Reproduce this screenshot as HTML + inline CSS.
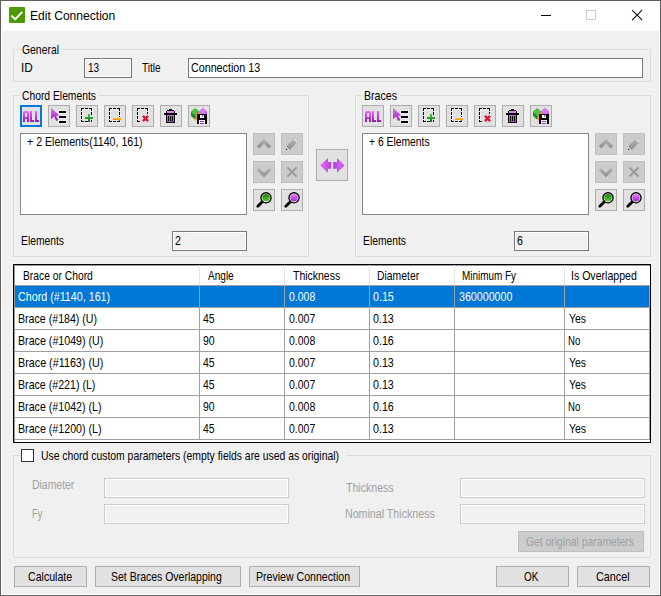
<!DOCTYPE html>
<html><head><meta charset="utf-8"><title>Edit Connection</title>
<style>
html,body{margin:0;padding:0;}
body{width:661px;height:596px;overflow:hidden;position:relative;background:#fff;font-family:"Liberation Sans",sans-serif;font-size:12.4px;color:#000;}
div,span{position:absolute;box-sizing:border-box;}
.t{white-space:nowrap;line-height:14px;height:14px;font-size:12.4px;transform-origin:0 0;}
.dis{color:#a0a0a0;}
.sel{color:#fff;}
.grp{border:1px solid #dcdcdc;}
.m{background:#f0f0f0;height:3px;}
.btn{background:#e1e1e1;border:1px solid #adadad;}
.btn.d{background:#cccccc;border-color:#bfbfbf;}
.btn.f{border:2px solid #0078d7;}
.tb{background:#fff;border:1px solid #7a7a7a;}
.ro{background:#f0f0f0;border:1px solid #7a7a7a;box-shadow:inset 0 0 0 1px #fff;}
.dtb{background:#f0f0f0;border:1px solid #cccccc;box-shadow:inset 0 0 0 1px #fff;}
svg{position:absolute;left:0;top:0;overflow:visible;}
.hl{background:#a0a0a0;height:1px;left:15px;width:635px;}
.vl{background:#a0a0a0;width:1px;top:286px;height:154px;}
.hv{background:#e5e5e5;width:1px;top:265px;height:20px;}
</style></head><body>
<!-- window frame -->
<div style="left:0;top:0;width:661px;height:596px;background:#5f5f5f;"></div>
<div style="left:1px;top:1px;width:659px;height:594px;background:#fff;"></div>
<div style="left:2px;top:31px;width:657px;height:563px;background:#f0f0f0;"></div>

<!-- title bar -->
<div style="left:9px;top:7px;width:16px;height:16px;background:#4e9a06;border-radius:1px;">
<svg width="16" height="16" viewBox="0 0 16 16"><path d="M2.3 8.6 L6.3 12.2 L13.3 4.9" fill="none" stroke="#fff" stroke-width="1.9"/></svg></div>
<span class="t" style="left:30.00px;top:9px;font-size:12px;transform:scaleX(1.0066);">Edit Connection</span>
<div style="left:541px;top:15px;width:10px;height:1px;background:#000;"></div>
<div style="left:586px;top:10px;width:10px;height:10px;border:1px solid #cccccc;"></div>
<svg width="661" height="31"><path d="M632.5 10.5 L641.7 19.7 M641.7 10.5 L632.5 19.7" stroke="#000" stroke-width="1.05" stroke-linecap="square" fill="none"/></svg>

<!-- General group -->
<div class="grp" style="left:13px;top:49px;width:638px;height:33px;"></div>
<div class="m" style="left:20px;top:48px;width:41px;"></div>
<div class="ro" style="left:84px;top:58px;width:48px;height:20px;"></div>
<div class="tb" style="left:188px;top:58px;width:455px;height:20px;"></div>

<!-- Chord Elements group -->
<div class="grp" style="left:13px;top:95px;width:296px;height:162px;"></div>
<div class="m" style="left:20px;top:94px;width:78px;"></div>
<div class="btn f" style="left:20px;top:105px;width:22px;height:22px;"></div>
<div class="btn" style="left:48px;top:105px;width:22px;height:22px;"></div>
<div class="btn" style="left:76px;top:105px;width:22px;height:22px;"></div>
<div class="btn" style="left:104px;top:105px;width:22px;height:22px;"></div>
<div class="btn" style="left:132px;top:105px;width:22px;height:22px;"></div>
<div class="btn" style="left:160px;top:105px;width:22px;height:22px;"></div>
<div class="btn" style="left:188px;top:105px;width:22px;height:22px;"></div>
<div class="tb" style="left:20px;top:133px;width:227px;height:82px;border-color:#828790;"></div>
<div class="btn d" style="left:253px;top:133px;width:22px;height:22px;"></div>
<div class="btn d" style="left:281px;top:133px;width:22px;height:22px;"></div>
<div class="btn d" style="left:253px;top:161px;width:22px;height:22px;"></div>
<div class="btn d" style="left:281px;top:161px;width:22px;height:22px;"></div>
<div class="btn" style="left:253px;top:189px;width:22px;height:22px;"></div>
<div class="btn" style="left:281px;top:189px;width:22px;height:22px;"></div>
<div class="ro" style="left:172px;top:231px;width:75px;height:20px;"></div>

<!-- swap -->
<div class="btn" style="left:316px;top:149px;width:32px;height:32px;"></div>

<!-- Braces group -->
<div class="grp" style="left:355px;top:95px;width:296px;height:162px;"></div>
<div class="m" style="left:362px;top:94px;width:38px;"></div>
<div class="btn" style="left:362px;top:105px;width:22px;height:22px;"></div>
<div class="btn" style="left:390px;top:105px;width:22px;height:22px;"></div>
<div class="btn" style="left:418px;top:105px;width:22px;height:22px;"></div>
<div class="btn" style="left:446px;top:105px;width:22px;height:22px;"></div>
<div class="btn" style="left:474px;top:105px;width:22px;height:22px;"></div>
<div class="btn" style="left:502px;top:105px;width:22px;height:22px;"></div>
<div class="btn" style="left:530px;top:105px;width:22px;height:22px;"></div>
<div class="tb" style="left:362px;top:133px;width:227px;height:82px;border-color:#828790;"></div>
<div class="btn d" style="left:595px;top:133px;width:22px;height:22px;"></div>
<div class="btn d" style="left:623px;top:133px;width:22px;height:22px;"></div>
<div class="btn d" style="left:595px;top:161px;width:22px;height:22px;"></div>
<div class="btn d" style="left:623px;top:161px;width:22px;height:22px;"></div>
<div class="btn" style="left:595px;top:189px;width:22px;height:22px;"></div>
<div class="btn" style="left:623px;top:189px;width:22px;height:22px;"></div>
<div class="ro" style="left:514px;top:231px;width:75px;height:20px;"></div>

<!-- grid -->
<div style="left:13px;top:264px;width:638px;height:179px;background:#fff;border:1px solid #000;"></div>
<div style="left:14px;top:265px;width:636px;height:1px;background:#9a9a9a;"></div>
<div style="left:14px;top:265px;width:1px;height:177px;background:#9a9a9a;"></div>
<div style="left:15px;top:286px;width:635px;height:21px;background:#0078d7;"></div>
<div class="hl" style="top:285px;"></div>
<div class="hl" style="top:307px;"></div><div class="hl" style="top:329px;"></div><div class="hl" style="top:351px;"></div>
<div class="hl" style="top:373px;"></div><div class="hl" style="top:395px;"></div><div class="hl" style="top:417px;"></div><div class="hl" style="top:439px;"></div>
<div class="vl" style="left:199px;"></div><div class="vl" style="left:284px;"></div><div class="vl" style="left:369px;"></div>
<div class="vl" style="left:454px;"></div><div class="vl" style="left:564px;"></div><div class="vl" style="left:649px;"></div>
<div class="hv" style="left:199px;"></div><div class="hv" style="left:284px;"></div><div class="hv" style="left:369px;"></div>
<div class="hv" style="left:454px;"></div><div class="hv" style="left:564px;"></div>

<!-- custom params group -->
<div class="grp" style="left:13px;top:455px;width:638px;height:103px;"></div>
<div class="m" style="left:20px;top:454px;width:326px;"></div>
<div style="left:21px;top:449px;width:13px;height:13px;background:#fff;border:1px solid #333;"></div>
<div class="dtb" style="left:104px;top:478px;width:185px;height:20px;"></div>
<div class="dtb" style="left:104px;top:504px;width:185px;height:20px;"></div>
<div class="dtb" style="left:460px;top:478px;width:185px;height:20px;"></div>
<div class="dtb" style="left:460px;top:504px;width:185px;height:20px;"></div>
<div class="btn d" style="left:518px;top:531px;width:126px;height:21px;"></div>

<!-- bottom buttons -->
<div class="btn" style="left:14px;top:566px;width:73px;height:21px;"></div>
<div class="btn" style="left:95px;top:566px;width:146px;height:21px;"></div>
<div class="btn" style="left:249px;top:566px;width:111px;height:21px;"></div>
<div class="btn" style="left:496px;top:566px;width:73px;height:21px;"></div>
<div class="btn" style="left:577px;top:566px;width:73px;height:21px;"></div>

<svg width="661" height="596" viewBox="0 0 661 596" shape-rendering="auto"><defs>
<linearGradient id="gP" gradientUnits="userSpaceOnUse" x1="0" y1="111" x2="0" y2="122"><stop offset="0" stop-color="#e968ff"/><stop offset="1" stop-color="#9618b4"/></linearGradient>
<linearGradient id="gC" gradientUnits="userSpaceOnUse" x1="0" y1="108" x2="0" y2="121"><stop offset="0" stop-color="#e272ff"/><stop offset="1" stop-color="#9c1cba"/></linearGradient>
<linearGradient id="gG" gradientUnits="userSpaceOnUse" x1="0" y1="114" x2="0" y2="122"><stop offset="0" stop-color="#46cc46"/><stop offset="1" stop-color="#057805"/></linearGradient>
<linearGradient id="gO" gradientUnits="userSpaceOnUse" x1="0" y1="118" x2="0" y2="120"><stop offset="0" stop-color="#ffc31e"/><stop offset="1" stop-color="#ff8800"/></linearGradient>
<linearGradient id="gT" gradientUnits="userSpaceOnUse" x1="0" y1="115" x2="0" y2="122"><stop offset="0" stop-color="#d468f0"/><stop offset="1" stop-color="#b040d2"/></linearGradient>
<linearGradient id="gGray" x1="0" y1="0" x2="0" y2="1"><stop offset="0" stop-color="#b4b4b4"/><stop offset="1" stop-color="#8c8c8c"/></linearGradient>
<linearGradient id="gLG" x1="0" y1="0" x2="0" y2="1"><stop offset="0" stop-color="#168400"/><stop offset="1" stop-color="#5ccc38"/></linearGradient>
<linearGradient id="gLP" x1="0" y1="0" x2="0" y2="1"><stop offset="0" stop-color="#e878ff"/><stop offset="1" stop-color="#a826c8"/></linearGradient>
<linearGradient id="gAL" x1="0" y1="0" x2="1" y2="0"><stop offset="0" stop-color="#e878ff"/><stop offset="1" stop-color="#b23cd6"/></linearGradient>
<linearGradient id="gAR" x1="0" y1="0" x2="1" y2="0"><stop offset="0" stop-color="#b23cd6"/><stop offset="0.6" stop-color="#cc62ee"/><stop offset="1" stop-color="#c050e4"/></linearGradient>
</defs><g><path fill="url(#gP)" fill-rule="evenodd" d="M23 122V113Q23 111 25 111H27Q29 111 29 113V122H27V119H25V122ZM25 113H27V117H25Z"/><path fill="url(#gP)" d="M30 111H32V120H34V122H30ZM35 111H37V120H39V122H35Z"/><rect x="58" y="110" width="9" height="4" fill="#f2f2f2" opacity="0.85"/><rect x="59" y="111" width="7" height="2" fill="#000" /><rect x="58" y="115" width="9" height="4" fill="#f2f2f2" opacity="0.85"/><rect x="59" y="116" width="7" height="2" fill="#000" /><rect x="58" y="120" width="9" height="4" fill="#f2f2f2" opacity="0.85"/><rect x="59" y="121" width="7" height="2" fill="#000" /><path fill="url(#gC)" d="M51 107.8L51 119.2L53.9 116.4L56.3 121L58.3 119.9L56 115.7L59.4 115.6Z"/><rect x="82" y="109" width="3" height="1" fill="#ffffff" opacity="0.55"/><rect x="86" y="109" width="3" height="1" fill="#ffffff" opacity="0.55"/><rect x="90" y="109" width="3" height="1" fill="#ffffff" opacity="0.55"/><rect x="82" y="109" width="1" height="3" fill="#ffffff" opacity="0.55"/><rect x="82" y="113" width="1" height="3" fill="#ffffff" opacity="0.55"/><rect x="82" y="117" width="1" height="3" fill="#ffffff" opacity="0.55"/><rect x="82" y="121" width="1" height="2" fill="#ffffff" opacity="0.55"/><rect x="92" y="109" width="1" height="3" fill="#ffffff" opacity="0.55"/><rect x="92" y="113" width="1" height="3" fill="#ffffff" opacity="0.55"/><rect x="82" y="122" width="3" height="1" fill="#ffffff" opacity="0.55"/><rect x="86" y="122" width="3" height="1" fill="#ffffff" opacity="0.55"/><rect x="92" y="121" width="1" height="2" fill="#ffffff" opacity="0.55"/><rect x="81" y="108" width="3" height="1" fill="#000" /><rect x="85" y="108" width="3" height="1" fill="#000" /><rect x="89" y="108" width="3" height="1" fill="#000" /><rect x="81" y="108" width="1" height="3" fill="#000" /><rect x="81" y="112" width="1" height="3" fill="#000" /><rect x="81" y="116" width="1" height="3" fill="#000" /><rect x="81" y="120" width="1" height="2" fill="#000" /><rect x="91" y="108" width="1" height="3" fill="#000" /><rect x="91" y="112" width="1" height="3" fill="#000" /><rect x="81" y="121" width="3" height="1" fill="#000" /><rect x="85" y="121" width="3" height="1" fill="#000" /><rect x="91" y="120" width="1" height="2" fill="#000" /><rect x="85" y="117" width="8" height="2" fill="url(#gG)" /><rect x="88" y="114" width="2" height="8" fill="url(#gG)" /><rect x="110" y="109" width="3" height="1" fill="#ffffff" opacity="0.55"/><rect x="114" y="109" width="3" height="1" fill="#ffffff" opacity="0.55"/><rect x="118" y="109" width="3" height="1" fill="#ffffff" opacity="0.55"/><rect x="110" y="109" width="1" height="3" fill="#ffffff" opacity="0.55"/><rect x="110" y="113" width="1" height="3" fill="#ffffff" opacity="0.55"/><rect x="110" y="117" width="1" height="3" fill="#ffffff" opacity="0.55"/><rect x="110" y="121" width="1" height="2" fill="#ffffff" opacity="0.55"/><rect x="120" y="109" width="1" height="3" fill="#ffffff" opacity="0.55"/><rect x="120" y="113" width="1" height="3" fill="#ffffff" opacity="0.55"/><rect x="110" y="122" width="3" height="1" fill="#ffffff" opacity="0.55"/><rect x="114" y="122" width="3" height="1" fill="#ffffff" opacity="0.55"/><rect x="118" y="122" width="3" height="1" fill="#ffffff" opacity="0.55"/><rect x="120" y="117" width="1" height="1" fill="#ffffff" opacity="0.55"/><rect x="120" y="121" width="1" height="2" fill="#ffffff" opacity="0.55"/><rect x="109" y="108" width="3" height="1" fill="#000" /><rect x="113" y="108" width="3" height="1" fill="#000" /><rect x="117" y="108" width="3" height="1" fill="#000" /><rect x="109" y="108" width="1" height="3" fill="#000" /><rect x="109" y="112" width="1" height="3" fill="#000" /><rect x="109" y="116" width="1" height="3" fill="#000" /><rect x="109" y="120" width="1" height="2" fill="#000" /><rect x="119" y="108" width="1" height="3" fill="#000" /><rect x="119" y="112" width="1" height="3" fill="#000" /><rect x="109" y="121" width="3" height="1" fill="#000" /><rect x="113" y="121" width="3" height="1" fill="#000" /><rect x="117" y="121" width="3" height="1" fill="#000" /><rect x="119" y="116" width="1" height="1" fill="#000" /><rect x="119" y="120" width="1" height="2" fill="#000" /><rect x="112.5" y="117.5" width="9" height="3" fill="#e8ecf8" opacity="0.7"/><rect x="113" y="118" width="8" height="2" fill="url(#gO)" /><rect x="138" y="109" width="3" height="1" fill="#ffffff" opacity="0.55"/><rect x="142" y="109" width="3" height="1" fill="#ffffff" opacity="0.55"/><rect x="146" y="109" width="3" height="1" fill="#ffffff" opacity="0.55"/><rect x="138" y="109" width="1" height="3" fill="#ffffff" opacity="0.55"/><rect x="138" y="113" width="1" height="3" fill="#ffffff" opacity="0.55"/><rect x="138" y="117" width="1" height="3" fill="#ffffff" opacity="0.55"/><rect x="138" y="121" width="1" height="2" fill="#ffffff" opacity="0.55"/><rect x="148" y="109" width="1" height="3" fill="#ffffff" opacity="0.55"/><rect x="148" y="113" width="1" height="2" fill="#ffffff" opacity="0.55"/><rect x="138" y="122" width="3" height="1" fill="#ffffff" opacity="0.55"/><rect x="137" y="108" width="3" height="1" fill="#000" /><rect x="141" y="108" width="3" height="1" fill="#000" /><rect x="145" y="108" width="3" height="1" fill="#000" /><rect x="137" y="108" width="1" height="3" fill="#000" /><rect x="137" y="112" width="1" height="3" fill="#000" /><rect x="137" y="116" width="1" height="3" fill="#000" /><rect x="137" y="120" width="1" height="2" fill="#000" /><rect x="147" y="108" width="1" height="3" fill="#000" /><rect x="147" y="112" width="1" height="2" fill="#000" /><rect x="137" y="121" width="3" height="1" fill="#000" /><path d="M142.9 115.9L148.1 121.1M148.1 115.9L142.9 121.1" stroke="#dd1533" stroke-width="2.3" fill="none"/><path d="M163.5 112.5H177.5V115.5H175.5V123.5H165.5V115.5H163.5Z M165.5 109.8H168.5V108.5H172.5V109.8H175.5V113H165.5Z" fill="#f6f6f6" opacity="0.6"/><rect x="169" y="109" width="3" height="1" fill="#000" /><rect x="167" y="110" width="7" height="1" fill="#000" /><rect x="166" y="111" width="9" height="2" fill="#000" /><rect x="167" y="111" width="7" height="2" fill="#f57aff" /><rect x="164" y="113" width="13" height="2" fill="#000" /><rect x="166" y="115" width="9" height="8" fill="#000" /><rect x="167" y="115" width="7" height="7" fill="url(#gT)" /><rect x="168" y="116" width="1" height="5" fill="#000" /><rect x="170" y="116" width="1" height="5" fill="#000" /><rect x="172" y="116" width="1" height="5" fill="#000" /><path d="M195 108L199 111.5L195 115Z" fill="#3aa838"/><path d="M195 108L199 111.5L195 115L191 111.5Z" fill="#4cc044"/><path d="M191 111.5L195 115V119.6L191 116Z" fill="#149222"/><path d="M195 115L199 111.5V116L195 119.6Z" fill="#2ca232"/><path d="M203 108L207 111.5V115.5L203 118L199 115.5V111.5Z" fill="#c45ce8"/><path d="M203 108L207 111.5L203 114.5L199 111.5Z" fill="#d67af4"/><path d="M199 112L201.2 114.2V120.5H195.6V115Z" fill="#ff961c"/><rect x="197" y="114" width="10" height="10" fill="#000" /><rect x="200" y="115" width="4" height="3" fill="#fff" /><rect x="202" y="115" width="1" height="2" fill="#b040d8" /><rect x="199" y="120" width="6" height="4" fill="#fff" /><rect x="200" y="121" width="4" height="1" fill="#a030c8" /><rect x="200" y="123" width="4" height="1" fill="#a030c8" /><path d="M264 139L271.2 146.1L268.8 148.4L264 143.6L259.2 148.4L256.8 146.1Z" fill="url(#gGray)"/><path d="M264 177.3L271.2 170.2L268.8 167.9L264 172.7L259.2 167.9L256.8 170.2Z" fill="url(#gGray)"/><path d="M286 146.4L293 139.4L296.6 143L289.6 150Z" fill="url(#gGray)"/><path d="M286 146.4L289.6 150H286Z" fill="#e4e4e4"/><path d="M286 148.1L287.9 150H286Z" fill="#404040"/><path d="M293 139.4L294.4 138Q295 137.5 295.6 138L298 140.4Q298.5 141 298 141.6L296.6 143Z" fill="#dcdcdc" stroke="#a8a8a8" stroke-width="0.7"/><path d="M287.5 167.5L296.5 176.5M296.5 167.5L287.5 176.5" stroke="#9a9a9a" stroke-width="2" fill="none"/><path d="M262.8 201.2L257.8 206.2" stroke="#000" stroke-width="2.8" stroke-linecap="round" fill="none"/><circle cx="266" cy="197.8" r="5.05" fill="#fff" stroke="#000" stroke-width="1.35"/><circle cx="266" cy="197.8" r="3.75" fill="url(#gLG)"/><path d="M290.8 201.2L285.8 206.2" stroke="#000" stroke-width="2.8" stroke-linecap="round" fill="none"/><circle cx="294" cy="197.8" r="5.05" fill="#fff" stroke="#000" stroke-width="1.35"/><circle cx="294" cy="197.8" r="3.75" fill="url(#gLP)"/></g><g transform="translate(342 0)"><path fill="url(#gP)" fill-rule="evenodd" d="M23 122V113Q23 111 25 111H27Q29 111 29 113V122H27V119H25V122ZM25 113H27V117H25Z"/><path fill="url(#gP)" d="M30 111H32V120H34V122H30ZM35 111H37V120H39V122H35Z"/><rect x="58" y="110" width="9" height="4" fill="#f2f2f2" opacity="0.85"/><rect x="59" y="111" width="7" height="2" fill="#000" /><rect x="58" y="115" width="9" height="4" fill="#f2f2f2" opacity="0.85"/><rect x="59" y="116" width="7" height="2" fill="#000" /><rect x="58" y="120" width="9" height="4" fill="#f2f2f2" opacity="0.85"/><rect x="59" y="121" width="7" height="2" fill="#000" /><path fill="url(#gC)" d="M51 107.8L51 119.2L53.9 116.4L56.3 121L58.3 119.9L56 115.7L59.4 115.6Z"/><rect x="82" y="109" width="3" height="1" fill="#ffffff" opacity="0.55"/><rect x="86" y="109" width="3" height="1" fill="#ffffff" opacity="0.55"/><rect x="90" y="109" width="3" height="1" fill="#ffffff" opacity="0.55"/><rect x="82" y="109" width="1" height="3" fill="#ffffff" opacity="0.55"/><rect x="82" y="113" width="1" height="3" fill="#ffffff" opacity="0.55"/><rect x="82" y="117" width="1" height="3" fill="#ffffff" opacity="0.55"/><rect x="82" y="121" width="1" height="2" fill="#ffffff" opacity="0.55"/><rect x="92" y="109" width="1" height="3" fill="#ffffff" opacity="0.55"/><rect x="92" y="113" width="1" height="3" fill="#ffffff" opacity="0.55"/><rect x="82" y="122" width="3" height="1" fill="#ffffff" opacity="0.55"/><rect x="86" y="122" width="3" height="1" fill="#ffffff" opacity="0.55"/><rect x="92" y="121" width="1" height="2" fill="#ffffff" opacity="0.55"/><rect x="81" y="108" width="3" height="1" fill="#000" /><rect x="85" y="108" width="3" height="1" fill="#000" /><rect x="89" y="108" width="3" height="1" fill="#000" /><rect x="81" y="108" width="1" height="3" fill="#000" /><rect x="81" y="112" width="1" height="3" fill="#000" /><rect x="81" y="116" width="1" height="3" fill="#000" /><rect x="81" y="120" width="1" height="2" fill="#000" /><rect x="91" y="108" width="1" height="3" fill="#000" /><rect x="91" y="112" width="1" height="3" fill="#000" /><rect x="81" y="121" width="3" height="1" fill="#000" /><rect x="85" y="121" width="3" height="1" fill="#000" /><rect x="91" y="120" width="1" height="2" fill="#000" /><rect x="85" y="117" width="8" height="2" fill="url(#gG)" /><rect x="88" y="114" width="2" height="8" fill="url(#gG)" /><rect x="110" y="109" width="3" height="1" fill="#ffffff" opacity="0.55"/><rect x="114" y="109" width="3" height="1" fill="#ffffff" opacity="0.55"/><rect x="118" y="109" width="3" height="1" fill="#ffffff" opacity="0.55"/><rect x="110" y="109" width="1" height="3" fill="#ffffff" opacity="0.55"/><rect x="110" y="113" width="1" height="3" fill="#ffffff" opacity="0.55"/><rect x="110" y="117" width="1" height="3" fill="#ffffff" opacity="0.55"/><rect x="110" y="121" width="1" height="2" fill="#ffffff" opacity="0.55"/><rect x="120" y="109" width="1" height="3" fill="#ffffff" opacity="0.55"/><rect x="120" y="113" width="1" height="3" fill="#ffffff" opacity="0.55"/><rect x="110" y="122" width="3" height="1" fill="#ffffff" opacity="0.55"/><rect x="114" y="122" width="3" height="1" fill="#ffffff" opacity="0.55"/><rect x="118" y="122" width="3" height="1" fill="#ffffff" opacity="0.55"/><rect x="120" y="117" width="1" height="1" fill="#ffffff" opacity="0.55"/><rect x="120" y="121" width="1" height="2" fill="#ffffff" opacity="0.55"/><rect x="109" y="108" width="3" height="1" fill="#000" /><rect x="113" y="108" width="3" height="1" fill="#000" /><rect x="117" y="108" width="3" height="1" fill="#000" /><rect x="109" y="108" width="1" height="3" fill="#000" /><rect x="109" y="112" width="1" height="3" fill="#000" /><rect x="109" y="116" width="1" height="3" fill="#000" /><rect x="109" y="120" width="1" height="2" fill="#000" /><rect x="119" y="108" width="1" height="3" fill="#000" /><rect x="119" y="112" width="1" height="3" fill="#000" /><rect x="109" y="121" width="3" height="1" fill="#000" /><rect x="113" y="121" width="3" height="1" fill="#000" /><rect x="117" y="121" width="3" height="1" fill="#000" /><rect x="119" y="116" width="1" height="1" fill="#000" /><rect x="119" y="120" width="1" height="2" fill="#000" /><rect x="112.5" y="117.5" width="9" height="3" fill="#e8ecf8" opacity="0.7"/><rect x="113" y="118" width="8" height="2" fill="url(#gO)" /><rect x="138" y="109" width="3" height="1" fill="#ffffff" opacity="0.55"/><rect x="142" y="109" width="3" height="1" fill="#ffffff" opacity="0.55"/><rect x="146" y="109" width="3" height="1" fill="#ffffff" opacity="0.55"/><rect x="138" y="109" width="1" height="3" fill="#ffffff" opacity="0.55"/><rect x="138" y="113" width="1" height="3" fill="#ffffff" opacity="0.55"/><rect x="138" y="117" width="1" height="3" fill="#ffffff" opacity="0.55"/><rect x="138" y="121" width="1" height="2" fill="#ffffff" opacity="0.55"/><rect x="148" y="109" width="1" height="3" fill="#ffffff" opacity="0.55"/><rect x="148" y="113" width="1" height="2" fill="#ffffff" opacity="0.55"/><rect x="138" y="122" width="3" height="1" fill="#ffffff" opacity="0.55"/><rect x="137" y="108" width="3" height="1" fill="#000" /><rect x="141" y="108" width="3" height="1" fill="#000" /><rect x="145" y="108" width="3" height="1" fill="#000" /><rect x="137" y="108" width="1" height="3" fill="#000" /><rect x="137" y="112" width="1" height="3" fill="#000" /><rect x="137" y="116" width="1" height="3" fill="#000" /><rect x="137" y="120" width="1" height="2" fill="#000" /><rect x="147" y="108" width="1" height="3" fill="#000" /><rect x="147" y="112" width="1" height="2" fill="#000" /><rect x="137" y="121" width="3" height="1" fill="#000" /><path d="M142.9 115.9L148.1 121.1M148.1 115.9L142.9 121.1" stroke="#dd1533" stroke-width="2.3" fill="none"/><path d="M163.5 112.5H177.5V115.5H175.5V123.5H165.5V115.5H163.5Z M165.5 109.8H168.5V108.5H172.5V109.8H175.5V113H165.5Z" fill="#f6f6f6" opacity="0.6"/><rect x="169" y="109" width="3" height="1" fill="#000" /><rect x="167" y="110" width="7" height="1" fill="#000" /><rect x="166" y="111" width="9" height="2" fill="#000" /><rect x="167" y="111" width="7" height="2" fill="#f57aff" /><rect x="164" y="113" width="13" height="2" fill="#000" /><rect x="166" y="115" width="9" height="8" fill="#000" /><rect x="167" y="115" width="7" height="7" fill="url(#gT)" /><rect x="168" y="116" width="1" height="5" fill="#000" /><rect x="170" y="116" width="1" height="5" fill="#000" /><rect x="172" y="116" width="1" height="5" fill="#000" /><path d="M195 108L199 111.5L195 115Z" fill="#3aa838"/><path d="M195 108L199 111.5L195 115L191 111.5Z" fill="#4cc044"/><path d="M191 111.5L195 115V119.6L191 116Z" fill="#149222"/><path d="M195 115L199 111.5V116L195 119.6Z" fill="#2ca232"/><path d="M203 108L207 111.5V115.5L203 118L199 115.5V111.5Z" fill="#c45ce8"/><path d="M203 108L207 111.5L203 114.5L199 111.5Z" fill="#d67af4"/><path d="M199 112L201.2 114.2V120.5H195.6V115Z" fill="#ff961c"/><rect x="197" y="114" width="10" height="10" fill="#000" /><rect x="200" y="115" width="4" height="3" fill="#fff" /><rect x="202" y="115" width="1" height="2" fill="#b040d8" /><rect x="199" y="120" width="6" height="4" fill="#fff" /><rect x="200" y="121" width="4" height="1" fill="#a030c8" /><rect x="200" y="123" width="4" height="1" fill="#a030c8" /><path d="M264 139L271.2 146.1L268.8 148.4L264 143.6L259.2 148.4L256.8 146.1Z" fill="url(#gGray)"/><path d="M264 177.3L271.2 170.2L268.8 167.9L264 172.7L259.2 167.9L256.8 170.2Z" fill="url(#gGray)"/><path d="M286 146.4L293 139.4L296.6 143L289.6 150Z" fill="url(#gGray)"/><path d="M286 146.4L289.6 150H286Z" fill="#e4e4e4"/><path d="M286 148.1L287.9 150H286Z" fill="#404040"/><path d="M293 139.4L294.4 138Q295 137.5 295.6 138L298 140.4Q298.5 141 298 141.6L296.6 143Z" fill="#dcdcdc" stroke="#a8a8a8" stroke-width="0.7"/><path d="M287.5 167.5L296.5 176.5M296.5 167.5L287.5 176.5" stroke="#9a9a9a" stroke-width="2" fill="none"/><path d="M262.8 201.2L257.8 206.2" stroke="#000" stroke-width="2.8" stroke-linecap="round" fill="none"/><circle cx="266" cy="197.8" r="5.05" fill="#fff" stroke="#000" stroke-width="1.35"/><circle cx="266" cy="197.8" r="3.75" fill="url(#gLG)"/><path d="M290.8 201.2L285.8 206.2" stroke="#000" stroke-width="2.8" stroke-linecap="round" fill="none"/><circle cx="294" cy="197.8" r="5.05" fill="#fff" stroke="#000" stroke-width="1.35"/><circle cx="294" cy="197.8" r="3.75" fill="url(#gLP)"/></g><path d="M320 165.4L328 158.1V162.1H331.2V168.7H328V172.7Z" fill="url(#gAL)"/><path d="M344.6 165.4L337 158.1V162.1H333.2V168.7H337V172.7Z" fill="url(#gAR)"/></svg>
<!-- texts -->
<span class="t " style="left:21.75px;top:43px;transform:scaleX(0.8389);">General</span>
<span class="t " style="left:20.95px;top:61px;transform:scaleX(0.9482);">ID</span>
<span class="t " style="left:88.00px;top:61px;transform:scaleX(0.8063);">13</span>
<span class="t " style="left:141.70px;top:61px;transform:scaleX(0.8067);">Title</span>
<span class="t " style="left:190.80px;top:61px;transform:scaleX(0.8648);">Connection 13</span>
<span class="t " style="left:21.70px;top:89px;transform:scaleX(0.8325);">Chord Elements</span>
<span class="t " style="left:27.00px;top:135px;transform:scaleX(0.8556);">+ 2 Elements(1140, 161)</span>
<span class="t " style="left:20.57px;top:234px;transform:scaleX(0.8324);">Elements</span>
<span class="t " style="left:175.30px;top:234px;transform:scaleX(0.8571);">2</span>
<span class="t " style="left:363.84px;top:89px;transform:scaleX(0.8563);">Braces</span>
<span class="t " style="left:369.00px;top:135px;transform:scaleX(0.8349);">+ 6 Elements</span>
<span class="t " style="left:362.57px;top:234px;transform:scaleX(0.8324);">Elements</span>
<span class="t " style="left:517.30px;top:234px;transform:scaleX(0.8571);">6</span>
<span class="t " style="left:22.87px;top:269px;transform:scaleX(0.8313);">Brace or Chord</span>
<span class="t " style="left:207.50px;top:269px;transform:scaleX(0.8113);">Angle</span>
<span class="t " style="left:293.30px;top:269px;transform:scaleX(0.8456);">Thickness</span>
<span class="t " style="left:376.66px;top:269px;transform:scaleX(0.8385);">Diameter</span>
<span class="t " style="left:462.00px;top:269px;transform:scaleX(0.8013);">Minimum Fy</span>
<span class="t " style="left:571.35px;top:269px;transform:scaleX(0.8525);">Is Overlapped</span>
<span class="t sel" style="left:18.00px;top:290px;transform:scaleX(0.8646);">Chord (#1140, 161)</span>
<span class="t sel" style="left:288.70px;top:290px;transform:scaleX(0.8452);">0.008</span>
<span class="t sel" style="left:373.30px;top:290px;transform:scaleX(0.8628);">0.15</span>
<span class="t sel" style="left:458.70px;top:290px;transform:scaleX(0.8611);">360000000</span>
<span class="t " style="left:17.74px;top:312px;transform:scaleX(0.8569);">Brace (#184) (U)</span>
<span class="t " style="left:203.30px;top:312px;transform:scaleX(0.8423);">45</span>
<span class="t " style="left:288.70px;top:312px;transform:scaleX(0.8452);">0.007</span>
<span class="t " style="left:373.30px;top:312px;transform:scaleX(0.8628);">0.13</span>
<span class="t " style="left:568.70px;top:312px;transform:scaleX(0.8393);">Yes</span>
<span class="t " style="left:17.74px;top:334px;transform:scaleX(0.8609);">Brace (#1049) (U)</span>
<span class="t " style="left:203.30px;top:334px;transform:scaleX(0.8423);">90</span>
<span class="t " style="left:288.70px;top:334px;transform:scaleX(0.8452);">0.008</span>
<span class="t " style="left:373.30px;top:334px;transform:scaleX(0.8628);">0.16</span>
<span class="t " style="left:567.92px;top:334px;transform:scaleX(0.7760);">No</span>
<span class="t " style="left:17.73px;top:356px;transform:scaleX(0.8691);">Brace (#1163) (U)</span>
<span class="t " style="left:203.30px;top:356px;transform:scaleX(0.8423);">45</span>
<span class="t " style="left:288.70px;top:356px;transform:scaleX(0.8452);">0.007</span>
<span class="t " style="left:373.30px;top:356px;transform:scaleX(0.8628);">0.13</span>
<span class="t " style="left:568.70px;top:356px;transform:scaleX(0.8393);">Yes</span>
<span class="t " style="left:17.74px;top:378px;transform:scaleX(0.8576);">Brace (#221) (L)</span>
<span class="t " style="left:203.30px;top:378px;transform:scaleX(0.8423);">45</span>
<span class="t " style="left:288.70px;top:378px;transform:scaleX(0.8452);">0.007</span>
<span class="t " style="left:373.30px;top:378px;transform:scaleX(0.8628);">0.13</span>
<span class="t " style="left:568.70px;top:378px;transform:scaleX(0.8393);">Yes</span>
<span class="t " style="left:17.74px;top:400px;transform:scaleX(0.8606);">Brace (#1042) (L)</span>
<span class="t " style="left:203.30px;top:400px;transform:scaleX(0.8423);">90</span>
<span class="t " style="left:288.70px;top:400px;transform:scaleX(0.8452);">0.008</span>
<span class="t " style="left:373.30px;top:400px;transform:scaleX(0.8628);">0.16</span>
<span class="t " style="left:567.92px;top:400px;transform:scaleX(0.7760);">No</span>
<span class="t " style="left:17.74px;top:422px;transform:scaleX(0.8606);">Brace (#1200) (L)</span>
<span class="t " style="left:203.30px;top:422px;transform:scaleX(0.8423);">45</span>
<span class="t " style="left:288.70px;top:422px;transform:scaleX(0.8452);">0.007</span>
<span class="t " style="left:373.30px;top:422px;transform:scaleX(0.8628);">0.13</span>
<span class="t " style="left:568.70px;top:422px;transform:scaleX(0.8393);">Yes</span>
<span class="t " style="left:40.80px;top:449px;transform:scaleX(0.8386);">Use chord custom parameters (empty fields are used as original)</span>
<span class="t dis" style="left:31.56px;top:478px;transform:scaleX(0.8425);">Diameter</span>
<span class="t dis" style="left:31.66px;top:507px;transform:scaleX(0.7444);">Fy</span>
<span class="t dis" style="left:345.80px;top:481px;transform:scaleX(0.8546);">Thickness</span>
<span class="t dis" style="left:344.64px;top:507px;transform:scaleX(0.8601);">Nominal Thickness</span>
<span class="t dis" style="left:525.50px;top:535px;transform:scaleX(0.8339);">Get original parameters</span>
<span class="t " style="left:27.50px;top:570px;transform:scaleX(0.8539);">Calculate</span>
<span class="t " style="left:111.20px;top:570px;transform:scaleX(0.8460);">Set Braces Overlapping</span>
<span class="t " style="left:255.85px;top:570px;transform:scaleX(0.8536);">Preview Connection</span>
<span class="t " style="left:523.60px;top:570px;transform:scaleX(0.8048);">OK</span>
<span class="t " style="left:595.50px;top:570px;transform:scaleX(0.8726);">Cancel</span>
</body></html>
